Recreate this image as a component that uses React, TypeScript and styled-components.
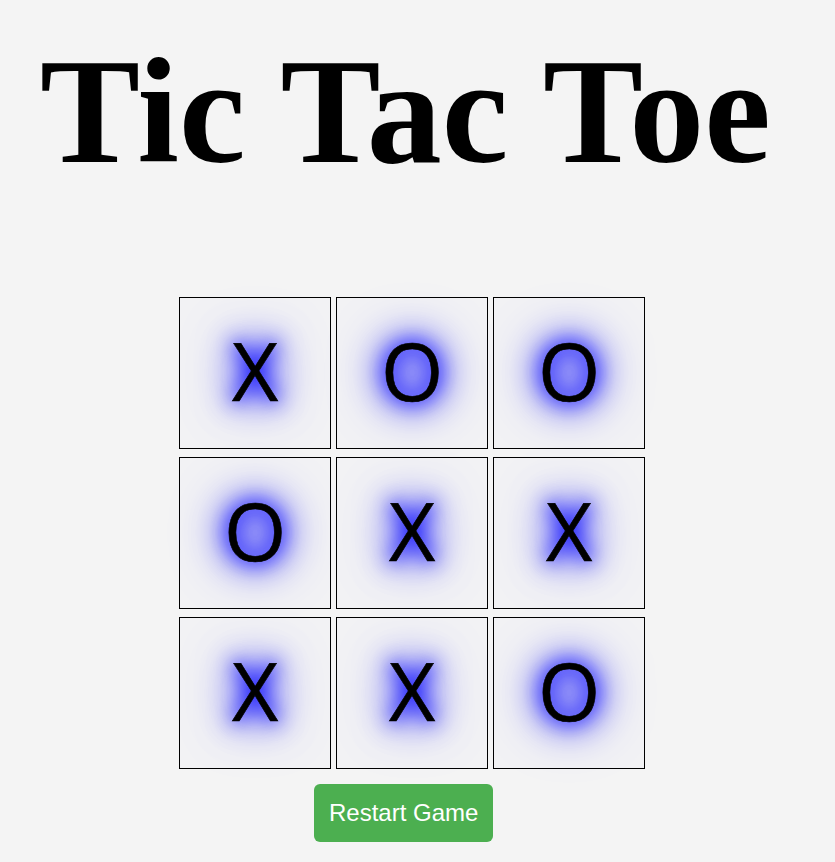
import * as React from "react";
import styled, { createGlobalStyle } from "styled-components";

const GlobalStyle = createGlobalStyle`
  html, body {
    margin: 0;
    padding: 0;
    background-color: #f4f4f4;
  }
`;

const Page = styled.div`
  display: flex;
  flex-direction: column;
  align-items: flex-start;
  width: 835px;
  height: 862px;
  box-sizing: border-box;
  padding-top: 36px;
  overflow: hidden;
`;

const Title = styled.h1`
  margin: 0 0 0 40px;
  font-family: "Liberation Serif", "Times New Roman", serif;
  font-weight: bold;
  font-size: 150px;
  line-height: 150px;
  color: #000;
  white-space: nowrap;
`;

const GameArea = styled.div`
  display: flex;
  flex-direction: column;
  margin: 111px 0 0 179px;
`;

const Board = styled.div`
  display: grid;
  grid-template-columns: repeat(3, 152px);
  grid-auto-rows: 152px;
  column-gap: 5px;
  row-gap: 8px;
`;

const Cell = styled.button`
  display: flex;
  align-items: center;
  justify-content: center;
  box-sizing: border-box;
  width: 152px;
  height: 152px;
  padding: 0 0 6px;
  border: 1px solid #000;
  background-color: #f2f2f4;
  font-family: "Open Sans", "Noto Sans", sans-serif;
  font-size: 80px;
  line-height: 1;
  color: #000;
  -webkit-text-stroke: 0.6px #000;
  cursor: pointer;
  text-shadow: 0 0 18px #0000ff, 0 0 28px #0000ff, 0 0 40px #0000ff,
    0 0 55px #4040ff;
`;

const RestartButton = styled.button`
  align-self: flex-start;
  margin: 15px 0 0 135px;
  padding: 15px;
  border: 0;
  border-radius: 6px;
  background-color: #4caf50;
  color: #fff;
  font-family: "Liberation Sans", Arial, sans-serif;
  font-size: 24px;
  line-height: 28px;
  cursor: pointer;
`;

const initialBoard = ["X", "O", "O", "O", "X", "X", "X", "X", "O"];

export default function App() {
  const [squares, setSquares] = React.useState<string[]>(initialBoard);

  return (
    <Page>
      <GlobalStyle />
      <Title>Tic Tac Toe</Title>
      <GameArea>
        <Board>
          {squares.map((value, i) => (
            <Cell key={i}>{value}</Cell>
          ))}
        </Board>
        <RestartButton onClick={() => setSquares(Array(9).fill(""))}>
          Restart Game
        </RestartButton>
      </GameArea>
    </Page>
  );
}
